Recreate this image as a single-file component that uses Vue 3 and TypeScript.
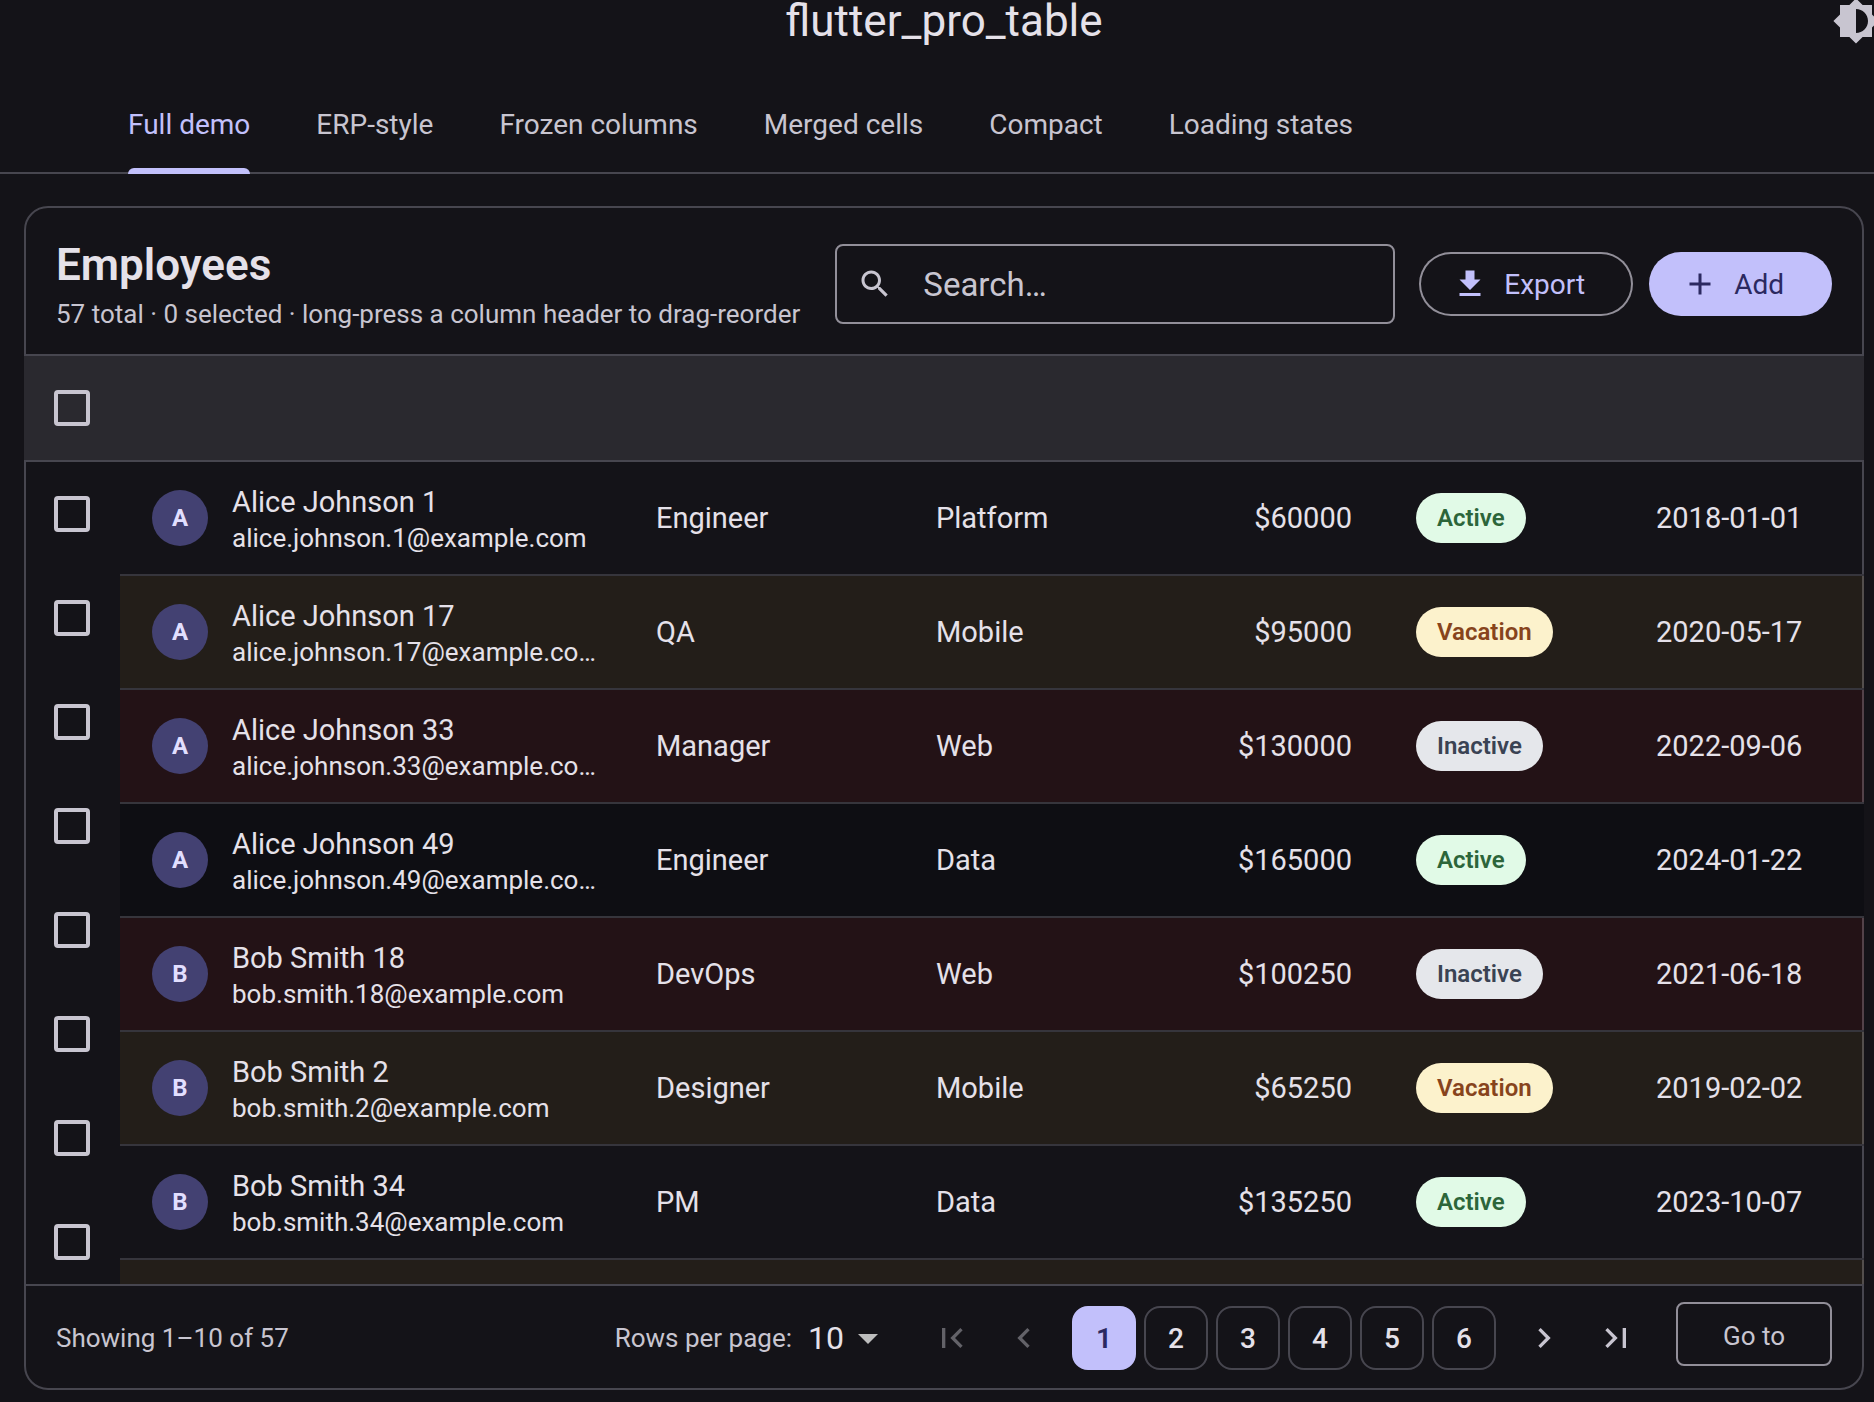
<script setup lang="ts">
import { ref } from 'vue'

type Status = 'Active' | 'Vacation' | 'Inactive'

interface Employee {
  name: string
  email: string
  role: string
  team: string
  salary: number
  status: Status
  hired: string
  striped?: boolean
}

const tabs = ['Full demo', 'ERP-style', 'Frozen columns', 'Merged cells', 'Compact', 'Loading states']
const activeTab = ref(tabs[0])

const employees: Employee[] = [
  { name: 'Alice Johnson 1', email: 'alice.johnson.1@example.com', role: 'Engineer', team: 'Platform', salary: 60000, status: 'Active', hired: '2018-01-01' },
  { name: 'Alice Johnson 17', email: 'alice.johnson.17@example.com', role: 'QA', team: 'Mobile', salary: 95000, status: 'Vacation', hired: '2020-05-17' },
  { name: 'Alice Johnson 33', email: 'alice.johnson.33@example.com', role: 'Manager', team: 'Web', salary: 130000, status: 'Inactive', hired: '2022-09-06' },
  { name: 'Alice Johnson 49', email: 'alice.johnson.49@example.com', role: 'Engineer', team: 'Data', salary: 165000, status: 'Active', hired: '2024-01-22', striped: true },
  { name: 'Bob Smith 18', email: 'bob.smith.18@example.com', role: 'DevOps', team: 'Web', salary: 100250, status: 'Inactive', hired: '2021-06-18' },
  { name: 'Bob Smith 2', email: 'bob.smith.2@example.com', role: 'Designer', team: 'Mobile', salary: 65250, status: 'Vacation', hired: '2019-02-02' },
  { name: 'Bob Smith 34', email: 'bob.smith.34@example.com', role: 'PM', team: 'Data', salary: 135250, status: 'Active', hired: '2023-10-07' },
]

const selectable = 8
const selected = ref<number[]>([])
const search = ref('')
const pageSize = ref(10)
const page = ref(1)
const goTo = ref('')

function rowClass(e: Employee) {
  return [`row-${e.status.toLowerCase()}`, { striped: e.striped }]
}
</script>

<template>
  <div class="page">
    <header class="app-bar">
      <h1>flutter_pro_table</h1>
      <button class="theme" type="button" aria-label="Toggle brightness">
        <svg viewBox="0 0 24 24"><path d="M20 15.31L23.31 12 20 8.69V4h-4.69L12 .69 8.69 4H4v4.69L.69 12 4 15.31V20h4.69L12 23.31 15.31 20H20v-4.69zM12 18V6c3.31 0 6 2.69 6 6s-2.69 6-6 6z" /></svg>
      </button>
    </header>

    <nav class="tabs" aria-label="Demos">
      <button
        v-for="tab in tabs"
        :key="tab"
        type="button"
        :class="{ active: tab === activeTab }"
        @click="activeTab = tab"
      >
        <span>{{ tab }}</span>
      </button>
    </nav>

    <main class="card">
      <section class="toolbar">
        <div class="heading">
          <h2>Employees</h2>
          <p>57 total · 0 selected · long-press a column header to drag-reorder</p>
        </div>
        <label class="search">
          <svg viewBox="0 0 24 24"><path d="M15.5 14h-.79l-.28-.27C15.41 12.59 16 11.11 16 9.5 16 5.91 13.09 3 9.5 3S3 5.91 3 9.5 5.91 16 9.5 16c1.61 0 3.09-.59 4.23-1.57l.27.28v.79l5 4.99L20.49 19l-4.99-5zm-6 0C7.01 14 5 11.99 5 9.5S7.01 5 9.5 5 14 7.01 14 9.5 11.99 14 9.5 14z" /></svg>
          <input v-model="search" type="text" placeholder="Search…" aria-label="Search" />
        </label>
        <div class="actions">
          <button class="pill outlined" type="button">
            <svg viewBox="0 0 24 24"><path d="M19 9h-4V3H9v6H5l7 7 7-7zM5 18v2h14v-2H5z" /></svg>
            Export
          </button>
          <button class="pill filled" type="button">
            <svg viewBox="0 0 24 24"><path d="M19 13h-6v6h-2v-6H5v-2h6V5h2v6h6v2z" /></svg>
            Add
          </button>
        </div>
      </section>

      <section class="grid">
        <table class="picker">
          <thead>
            <tr><th><input type="checkbox" aria-label="Select all rows" /></th></tr>
          </thead>
          <tbody>
            <tr v-for="n in selectable" :key="n">
              <td><input v-model="selected" type="checkbox" :value="n" :aria-label="`Select row ${n}`" /></td>
            </tr>
          </tbody>
        </table>
        <table class="data">
          <colgroup>
            <col />
            <col class="w-role" />
            <col class="w-team" />
            <col class="w-salary" />
            <col class="w-status" />
            <col class="w-hired" />
          </colgroup>
          <thead>
            <tr><th colspan="6"></th></tr>
          </thead>
          <tbody>
            <tr v-for="e in employees" :key="e.name" :class="rowClass(e)">
              <td class="lead">
                <div class="person">
                  <span class="avatar">{{ e.name[0] }}</span>
                  <div class="who">
                    <div class="name">{{ e.name }}</div>
                    <div class="email">{{ e.email }}</div>
                  </div>
                </div>
              </td>
              <td>{{ e.role }}</td>
              <td>{{ e.team }}</td>
              <td class="num">${{ e.salary }}</td>
              <td><span class="badge" :class="e.status.toLowerCase()">{{ e.status }}</span></td>
              <td>{{ e.hired }}</td>
            </tr>
            <tr class="row-vacation"><td colspan="6"></td></tr>
          </tbody>
        </table>
      </section>

      <footer class="pager">
        <span class="range">Showing 1–10 of 57</span>
        <label class="size">
          <span>Rows per page:</span>
          <span class="select">
            <select v-model="pageSize">
              <option :value="10">10</option>
              <option :value="25">25</option>
              <option :value="50">50</option>
            </select>
            <svg viewBox="0 0 24 24"><path d="M7 10l5 5 5-5z" /></svg>
          </span>
        </label>
        <div class="steps">
          <button class="step" type="button" disabled aria-label="First page">
            <svg viewBox="0 0 24 24"><path d="M18.41 16.59L13.82 12l4.59-4.59L17 6l-6 6 6 6zM6 6h2v12H6z" /></svg>
          </button>
          <button class="step" type="button" disabled aria-label="Previous page">
            <svg viewBox="0 0 24 24"><path d="M15.41 7.41L14 6l-6 6 6 6 1.41-1.41L10.83 12z" /></svg>
          </button>
          <div class="pages">
            <button
              v-for="n in 6"
              :key="n"
              type="button"
              :class="{ current: n === page }"
              @click="page = n"
            >{{ n }}</button>
          </div>
          <button class="step" type="button" aria-label="Next page">
            <svg viewBox="0 0 24 24"><path d="M10 6L8.59 7.41 13.17 12l-4.58 4.59L10 18l6-6z" /></svg>
          </button>
          <button class="step" type="button" aria-label="Last page">
            <svg viewBox="0 0 24 24"><path d="M5.59 7.41L10.18 12l-4.59 4.59L7 18l6-6-6-6zM16 6h2v12h-2z" /></svg>
          </button>
        </div>
        <input v-model="goTo" class="goto" type="text" placeholder="Go to" aria-label="Go to page" />
      </footer>
    </main>
  </div>
</template>

<style>
body {
  margin: 0;
  background: #141318;
}
</style>

<style scoped>
.page {
  --surface: #141318;
  --text: #e5e1e9;
  --muted: #c8c5d0;
  --line: #47464f;
  --outline: #928f99;
  --primary: #c2c0fb;
  --on-primary: #2b2960;
  display: flex;
  flex-direction: column;
  height: 100vh;
  min-height: 900px;
  overflow: hidden;
  background: var(--surface);
  color: var(--text);
  font-family: Roboto, 'Noto Sans', sans-serif;
  font-size: 28px;
}

*,
*::before,
*::after {
  box-sizing: border-box;
}

button,
input,
select {
  margin: 0;
  padding: 0;
  border: 0;
  background: none;
  color: inherit;
  font: inherit;
}

h1,
h2,
p {
  margin: 0;
}

svg {
  display: block;
  flex: none;
  fill: currentColor;
}

.app-bar {
  display: grid;
  grid-template-columns: 1fr auto 1fr;
  grid-template-rows: 42px;
  align-items: center;
  flex: none;
  padding-left: 14px;
  margin-bottom: 36px;
}

.app-bar h1 {
  grid-column: 2;
  font-size: 44px;
  line-height: 42px;
  font-weight: 400;
}

.theme {
  justify-self: end;
  margin-right: -6px;
  color: var(--muted);
}

.theme svg {
  width: 48px;
  height: 48px;
}

.tabs {
  display: flex;
  flex: none;
  height: 96px;
  padding-left: 95px;
  box-shadow: inset 0 -2px var(--line);
}

.tabs button {
  display: flex;
  padding: 0 33px;
  color: var(--muted);
}

.tabs span {
  display: flex;
  align-items: center;
  padding-bottom: 4px;
  position: relative;
}

.tabs .active {
  color: var(--primary);
}

.tabs .active span::after {
  content: '';
  position: absolute;
  left: 0;
  right: 0;
  bottom: 0;
  height: 6px;
  border-radius: 6px 6px 0 0;
  background: var(--primary);
}

.card {
  display: flex;
  flex-direction: column;
  flex: 1;
  min-height: 0;
  margin: 32px 10px 12px 24px;
  border: 2px solid var(--line);
  border-radius: 24px;
}

.toolbar {
  display: flex;
  align-items: center;
  gap: 24px;
  padding: 30px 30px 24px;
}

.heading {
  flex: 1;
  min-width: 0;
  white-space: nowrap;
}

.heading h2 {
  margin-bottom: 6px;
  font-size: 44px;
  line-height: 54px;
  font-weight: 600;
}

.heading p {
  font-size: 26px;
  line-height: 32px;
  color: var(--muted);
}

.search {
  display: flex;
  align-items: center;
  gap: 30px;
  width: 560px;
  height: 80px;
  padding: 0 20px;
  border: 2px solid var(--outline);
  border-radius: 8px;
  color: var(--muted);
}

.search svg {
  width: 36px;
  height: 36px;
}

.search input {
  flex: 1;
  min-width: 0;
  font-size: 33px;
  outline: none;
}

input::placeholder {
  color: var(--muted);
  opacity: 1;
}

.actions {
  display: flex;
  gap: 16px;
}

.pill {
  display: flex;
  align-items: center;
  gap: 16px;
  height: 64px;
  padding: 0 48px 0 33px;
  border-radius: 32px;
}

.pill svg {
  width: 36px;
  height: 36px;
}

.outlined {
  box-shadow: inset 0 0 0 2px var(--outline);
  color: var(--primary);
}

.filled {
  background: var(--primary);
  color: var(--on-primary);
}

/* Overlaps the card's side borders so opaque rows run edge to edge. */
.grid {
  display: flex;
  flex: 1;
  min-height: 0;
  margin: 0 -2px;
  overflow: hidden;
  border-top: 2px solid var(--line);
  font-size: 29px;
}

table {
  border-collapse: separate;
  border-spacing: 0;
  table-layout: fixed;
  align-self: flex-start;
}

th {
  height: 106px;
  padding: 0;
  background: #2a292f;
  border-bottom: 2px solid var(--line);
}

.picker {
  width: 96px;
}

.picker th,
.picker td {
  padding: 0 0 0 30px;
  text-align: left;
}

.picker td {
  height: 104px;
}

.picker input {
  appearance: none;
  display: block;
  width: 36px;
  height: 36px;
  border: 4px solid var(--muted);
  border-radius: 4px;
}

.data {
  flex: 1;
  width: 0;
}

.w-role,
.w-team {
  width: 280px;
}

.w-salary {
  width: 200px;
}

.w-status,
.w-hired {
  width: 240px;
}

.data td {
  height: 114px;
  padding: 0 32px;
  border-bottom: 2px solid #36353c;
  white-space: nowrap;
}

.data .lead {
  padding-right: 26px;
}

.data .num {
  text-align: right;
}

.row-vacation {
  background: rgba(245, 190, 40, 0.07);
}

.row-inactive {
  background: rgba(239, 20, 0, 0.07);
}

.striped {
  background: #0e0e13;
}

.person {
  display: flex;
  align-items: center;
  gap: 24px;
}

.avatar {
  display: flex;
  align-items: center;
  justify-content: center;
  flex: none;
  width: 56px;
  height: 56px;
  border-radius: 50%;
  background: #434172;
  color: #e2dfff;
  font-size: 24px;
  font-weight: 700;
}

.who {
  min-width: 0;
}

.name {
  line-height: 40px;
}

.email {
  overflow: hidden;
  text-overflow: ellipsis;
  font-size: 26px;
  line-height: 32px;
}

.badge {
  display: inline-block;
  padding: 0 21px;
  border-radius: 25px;
  font-size: 24px;
  line-height: 50px;
  font-weight: 600;
  vertical-align: middle;
}

.badge.active {
  background: #e1fae7;
  color: #2c653a;
}

.badge.vacation {
  background: #fcf2cc;
  color: #87441c;
}

.badge.inactive {
  background: #e5e7eb;
  color: #3a4353;
}

.pager {
  display: flex;
  align-items: center;
  flex: none;
  padding: 16px 30px 14px;
  border-top: 2px solid var(--line);
  font-size: 26px;
  color: var(--muted);
}

.range {
  margin-right: auto;
}

.size {
  display: flex;
  align-items: center;
  gap: 16px;
  margin-right: 24px;
}

.select {
  display: flex;
  align-items: center;
  position: relative;
  color: var(--text);
}

.select select {
  appearance: none;
  width: 84px;
  height: 48px;
  font-size: 32px;
  outline: none;
}

.select option {
  background: #2a292f;
}

.select svg {
  position: absolute;
  right: 0;
  width: 48px;
  height: 48px;
  color: #bdbdbd;
  pointer-events: none;
}

.steps {
  display: flex;
  align-items: center;
}

.step {
  display: flex;
  align-items: center;
  justify-content: center;
  width: 72px;
  height: 72px;
}

.step svg {
  width: 40px;
  height: 40px;
}

.step:disabled {
  color: #636268;
}

.pages {
  display: flex;
  gap: 8px;
  padding: 0 12px;
}

.pages button {
  width: 64px;
  height: 64px;
  border: 2px solid var(--line);
  border-radius: 16px;
  color: var(--text);
  font-size: 28px;
  font-weight: 500;
}

.pages .current {
  border-color: var(--primary);
  background: var(--primary);
  color: var(--on-primary);
  font-weight: 600;
}

.goto {
  align-self: flex-start;
  width: 156px;
  height: 64px;
  padding-top: 4px;
  margin-left: 24px;
  border: 2px solid var(--outline);
  border-radius: 8px;
  text-align: center;
  outline: none;
}
</style>
